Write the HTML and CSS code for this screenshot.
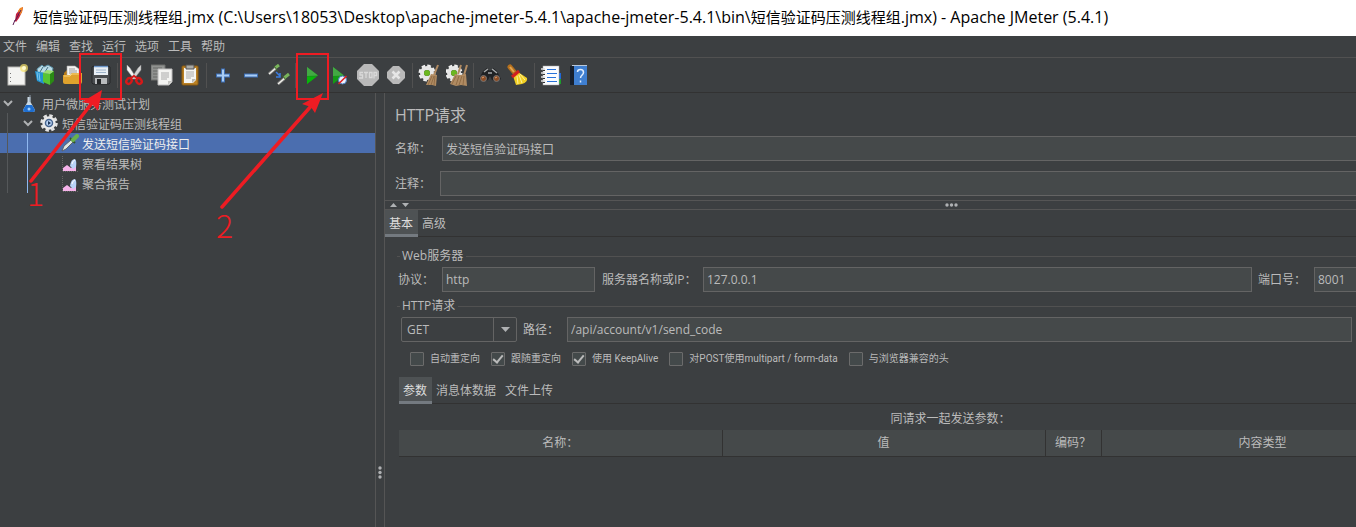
FILE: index.html
```html
<!DOCTYPE html>
<html lang="zh-CN">
<head>
<meta charset="utf-8">
<title>Apache JMeter (5.4.1)</title>
<link rel="stylesheet" href="styles.css">
</head>
<body>
<div class="app">
  <header class="titlebar">
    <svg class="feather" viewBox="0 0 14 22" aria-hidden="true">
      <path d="M4 15L5 8 9 3 12 1 11 6 8 12 5 16z" fill="#c3203f"/>
      <path d="M7 5L9 2 12 1 11 6 9 9z" fill="#f08a24"/>
      <path d="M4 14L2 19M4 15L10 4" stroke="#5a1b52" fill="none"/>
    </svg>
    <h1 class="title">短信验证码压测线程组<span class="latin">.jmx (C:\Users\18053\Desktop\apache-jmeter-5.4.1\apache-jmeter-5.4.1\bin\</span>短信验证码压测线程组<span class="latin">.jmx) - Apache JMeter (5.4.1)</span></h1>
  </header>

  <nav class="menu">
    <button>文件</button><button>编辑</button><button>查找</button><button>运行</button><button>选项</button><button>工具</button><button>帮助</button>
  </nav>

  <div class="toolbar" role="toolbar">
    <button aria-label="新建"><svg viewBox="0 0 22 22"><rect x="2" y="3" width="17" height="18" fill="#f3f3f1" stroke="#b8b8b4"/><path d="M4.500 9v1M4.500 13v1M4.500 17v1" stroke="#777"/><circle cx="18" cy="4" r="4" fill="#f6e36a" opacity=".7"/><circle cx="18" cy="4" r="2" fill="#fffbd0"/></svg></button>
    <button aria-label="模板"><svg viewBox="0 0 22 22"><path d="M3 5L8 1 10 3 14 1 19 4 18 9 4 9z" fill="#b9dbe6" stroke="#5a8fa5"/><path d="M6 8l3-5M11 8l3-5" stroke="#456f82"/><path d="M1 7L10 9V20L3 17z" fill="#2393cf"/><path d="M3 8l1 8M5 9l1 8" stroke="#7cc6ee"/><path d="M9 9L16 10V21L9 18z" fill="#57c534"/><path d="M16 10L20 7V17L16 21z" fill="#2a8a14"/><path d="M9 9L13 6 20 7 16 10z" fill="#9be070"/></svg></button>
    <button aria-label="打开"><svg viewBox="0 0 22 22"><path d="M2 9L5 6H16L19 9V18H2z" fill="#b87b16"/><path d="M5 2H13L17 5V12H5z" fill="#f4f4f2" stroke="#aaa" stroke-width=".6"/><path d="M7 5h6M7 7h8M7 9h8" stroke="#999"/><path d="M1 11H8L10 9H20V18Q20 20 18 20H3Q1 20 1 18z" fill="#dfa22d"/><path d="M2 12H8L10 10H19" stroke="#f6d27a" fill="none"/></svg></button>
    <button aria-label="保存"><svg viewBox="0 0 22 22"><path d="M2 3L4 2H18L20 3V19L19 20H3L2 19z" fill="#4a4d50" stroke="#252729"/><rect x="4" y="2" width="14" height="9" fill="#e9eff5"/><path d="M4 2.500h14" stroke="#6d96c8" stroke-width="1.500"/><path d="M6 6h10M6 8.500h10" stroke="#9fb5cc"/><rect x="5" y="14" width="12" height="6" fill="#b9bbbd"/><rect x="7" y="15" width="4" height="5" fill="#252729"/></svg></button>
    <i class="sep"></i>
    <button aria-label="剪切"><svg viewBox="0 0 22 22"><path d="M4 1L7 4 14 15 11 15 4 6z" fill="#f4f4f4" stroke="#999" stroke-width=".5"/><path d="M18 1L15 4 8 15 11 15 18 6z" fill="#d5d5d5" stroke="#888" stroke-width=".5"/><ellipse cx="6" cy="17" rx="2.500" ry="3" transform="rotate(35 6 17)" fill="none" stroke="#d71919" stroke-width="2.400"/><ellipse cx="16" cy="17" rx="2.500" ry="3" transform="rotate(-35 16 17)" fill="none" stroke="#d71919" stroke-width="2.400"/><path d="M8 14l3-2 3 2" stroke="#d71919" stroke-width="2" fill="none"/></svg></button>
    <button aria-label="复制"><svg viewBox="0 0 22 22"><path d="M0 1H14V16H0z" fill="#909290" stroke="#6c6e6c"/><path d="M2 4h9M2 7h5M2 10h5M2 13h5" stroke="#686a68"/><path d="M7 5H21V18L18 21H7z" fill="#f3f3f1" stroke="#bbb"/><path d="M10 9h8M10 11h8M10 13h8M10 15h6" stroke="#aaa"/><path d="M21 17h-4v4z" fill="#c5c5c1"/></svg></button>
    <button aria-label="粘贴"><svg viewBox="0 0 22 22"><rect x="3" y="2" width="16" height="19" rx="1" fill="#b98024" stroke="#8a5a10"/><path d="M5 4H17V16L14 19H5z" fill="#f5f5f3"/><path d="M7 1h8v4H7z" fill="#a9aaa7" stroke="#555"/><path d="M7 8h8M7 10h8M7 12h8M7 14h5" stroke="#aaa"/><path d="M17 15h-4v4z" fill="#b9b9b4"/></svg></button>
    <i class="sep"></i>
    <button aria-label="展开"><svg viewBox="0 0 22 22"><path d="M11 4.500V18.500M4 11.500H18" stroke="#3d6fb5" stroke-width="4"/><path d="M11 5.500V17.500M5 11.500H17" stroke="#a9cdf5" stroke-width="2"/></svg></button>
    <button aria-label="折叠"><svg viewBox="0 0 22 22"><path d="M4 11.500H18" stroke="#3d6fb5" stroke-width="4"/><path d="M5 11.500H17" stroke="#a9cdf5" stroke-width="2"/></svg></button>
    <button aria-label="切换"><svg viewBox="0 0 22 22"><path d="M1 10L8 4M10 20L17 14" stroke="#777" stroke-width="3"/><path d="M1 10L8 4M10 20L17 14" stroke="#efefea" stroke-width="1.600"/><path d="M7 4l4-3M16 14l5-4" stroke="#79b45b" stroke-width="3"/><path d="M6 2l4 5M14 11l4 5" stroke="#3f602f"/><path d="M8 8l4 4m0-3v4h-4" stroke="#3b7de0" stroke-width="1.500" fill="none"/></svg></button>
    <i class="sep"></i>
    <button aria-label="启动"><svg viewBox="0 0 22 22"><path d="M6 3L17 11.500 6 20z" fill="#149b16"/><path d="M6 3L17 11.500 6 12z" fill="#43a944"/><path d="M6 13h9L6 20z" fill="#08b50a"/></svg></button>
    <button aria-label="不停顿启动"><svg viewBox="0 0 22 22"><path d="M4 3L15 11.500 4 20z" fill="#149b16"/><path d="M4 3L15 11.500 4 12z" fill="#43a944"/><circle cx="13.500" cy="16" r="4" fill="#eef4ff" stroke="#4c7fc3"/><path d="M9.500 20L17.500 12" stroke="#e02020" stroke-width="1.600"/></svg></button>
    <button aria-label="停止" disabled><svg viewBox="0 0 22 22"><path d="M7 0H15L22 7V15L15 22H7L0 15V7z" fill="#b9b9b9"/><path d="M6 8.500H3V11H5.500V14H2M7 8.500H11M9 8.500V14M12.500 8.500H15V13.500H12.500zM17 14.500V8.500H19.500V11.500H17" fill="none" stroke="#d9d9d9" stroke-width="1.300"/></svg></button>
    <button aria-label="关闭" disabled><svg viewBox="0 0 22 22"><path d="M8 2H14L20 8V14L14 20H8L2 14V8z" fill="#b9b9b9"/><path d="M7.500 7.500L14.500 14.500M14.500 7.500L7.500 14.500" stroke="#e6e6e6" stroke-width="2.500"/></svg></button>
    <i class="sep"></i>
    <button aria-label="清除"><svg viewBox="0 0 22 22"><circle cx="9" cy="9" r="7" fill="none" stroke="#f0f0f0" stroke-width="3" stroke-dasharray="3.500 2"/><circle cx="9" cy="9" r="5" fill="none" stroke="#e6e6e6" stroke-width="4"/><circle cx="9" cy="9" r="3" fill="#6bb720"/><path d="M20 1L16 11" stroke="#b18b62" stroke-width="2"/><path d="M13 10l6 1-1 11-4-1-6 0z" fill="#b08b62"/><path d="M14 12l-4 9M16 12l-3 9M17 12l-1 9" stroke="#7c5934" stroke-width=".6"/></svg></button>
    <button aria-label="清除全部"><svg viewBox="0 0 22 22"><circle cx="8" cy="9" r="7" fill="none" stroke="#f0f0f0" stroke-width="3" stroke-dasharray="3.500 2"/><circle cx="8" cy="9" r="5" fill="none" stroke="#e6e6e6" stroke-width="4"/><circle cx="8" cy="9" r="3" fill="#6bb720"/><path d="M15 1L12 10M21 1L18 11" stroke="#b18b62" stroke-width="2"/><path d="M9 10l5 1 6-1 1 12-6-1-5 1-6-2z" fill="#b08b62"/><path d="M10 12l-4 8M13 12l-3 9M16 12l-3 9M18 12l-1 9" stroke="#7c5934" stroke-width=".6"/></svg></button>
    <i class="sep"></i>
    <button aria-label="搜索"><svg viewBox="0 0 22 22"><path d="M4 7L8 4 11 7 14 4 18 7 22 15 18 18 13 16 11 12 9 16 4 18 0 15z" fill="#202224"/><path d="M5 8l4-3M13 5l5 4M9 9h4" stroke="#a5a8a9" stroke-width="1.500"/><circle cx="4.500" cy="14.500" r="3" fill="#8c4d25" stroke="#777"/><circle cx="17.500" cy="14.500" r="3" fill="#8c4d25" stroke="#777"/><path d="M3 14l2-1M16 14l2-1" stroke="#e2a270"/></svg></button>
    <button aria-label="重置搜索"><svg viewBox="0 0 22 22"><path d="M3 3L8 9" stroke="#b5701d" stroke-width="5" stroke-linecap="round"/><path d="M3 3L7 8" stroke="#e2a652" stroke-width="2"/><path d="M11 8L20 14Q21 18 15 20L9 21 6 12z" fill="#f1cf24"/><path d="M10 12l1 8M12 11l3 8M13 10l5 6" stroke="#fff29a"/><path d="M5 13L12 7" stroke="#d11f1f" stroke-width="3"/></svg></button>
    <i class="sep"></i>
    <button aria-label="函数助手"><svg viewBox="0 0 22 22"><path d="M17 9h4v6h-4z" fill="#2168d8"/><path d="M17 15h4v5h-4z" fill="#1c9e2c"/><rect x="3" y="2" width="16" height="19" fill="#fafcff" stroke="#aaa" stroke-width=".5"/><path d="M7 5.500h9M7 9.500h10M7 13.500h9M7 17.500h10" stroke="#2772d9"/><path d="M1 5h4M1 9h4M1 13h4M1 17h4" stroke="#ddd" stroke-width="1.500"/><path d="M3 6.500h2M3 10.500h2M3 14.500h2M3 18.500h2" stroke="#333"/></svg></button>
    <button aria-label="帮助"><svg viewBox="0 0 22 22"><path d="M2 2H19V21H2z" fill="#3f7fd1"/><path d="M2 2H6V21H2z" fill="#17202e"/><path d="M4 1.500H19" stroke="#b9c9dc"/><path d="M9.500 8Q9.500 5.500 12.500 5.500T15.500 8.500C15.500 11 12.500 11 12.500 14M12.500 16.500V18.500" stroke="#e2efff" stroke-width="1.500" fill="none"/></svg></button>
  </div>

  <main class="body">
    <aside class="tree">
      <ul class="nodes">
        <li class="node">
          <svg class="chev" viewBox="0 0 10 10"><path d="M1 3L5 7 9 3" /></svg>
          <svg class="ico" viewBox="0 0 18 18"><path d="M7.500 3H10.500V8L15 16Q15 18 13 18H5Q3 18 3 16L7.500 8z" fill="#c9d8e4"/><path d="M6 11H12L15 16Q15 18 13 18H5Q3 18 3 16z" fill="#1f6fd1"/><path d="M10 1V8" stroke="#8d9ca9"/><circle cx="9" cy="15" r="1.500" fill="#9fd0ff"/></svg>
          <span>用户微服务测试计划</span>
        </li>
        <li class="node lv2">
          <svg class="chev" viewBox="0 0 10 10"><path d="M1 3L5 7 9 3" /></svg>
          <svg class="ico" viewBox="0 0 18 18"><circle cx="9" cy="9" r="7.500" fill="none" stroke="#e2e2e2" stroke-width="2.500" stroke-dasharray="3.500 2.390"/><circle cx="9" cy="9" r="5.500" fill="#46648e" stroke="#e9e9e9" stroke-width="2.500"/><circle cx="9" cy="9" r="2.800" fill="#b9d2f3"/><path d="M8 7L11 9 8 11z" fill="#1d3558"/></svg>
          <span>短信验证码压测线程组</span>
        </li>
        <li class="node lv3 selected">
          <svg class="ico" viewBox="0 0 18 18"><path d="M1 17L3 12 10 6 12 8 5 15z" fill="#dfe6e4" stroke="#555" stroke-width=".8"/><path d="M9 4L14 9" stroke="#35552a" stroke-width="2"/><path d="M12 6L16 2" stroke="#69b04b" stroke-width="4" stroke-linecap="round"/></svg>
          <span>发送短信验证码接口</span>
        </li>
        <li class="node lv3">
          <svg class="ico" viewBox="0 0 18 18"><path d="M1.500 2V17.500H17" stroke="#666" stroke-dasharray="1 1" fill="none"/><path d="M2 17V14L6 11 10 14 15 11V17z" fill="#f5b3ea"/><path d="M9 12Q10 5 14 5 16 7 15 13L12 15z" fill="#b9d4f8"/><path d="M11 10Q12 6 14 6" stroke="#fff" fill="none"/></svg>
          <span>察看结果树</span>
        </li>
        <li class="node lv3">
          <svg class="ico" viewBox="0 0 18 18"><path d="M1.500 2V17.500H17" stroke="#666" stroke-dasharray="1 1" fill="none"/><path d="M2 17V14L6 11 10 14 15 11V17z" fill="#f5b3ea"/><path d="M9 12Q10 5 14 5 16 7 15 13L12 15z" fill="#b9d4f8"/><path d="M11 10Q12 6 14 6" stroke="#fff" fill="none"/></svg>
          <span>聚合报告</span>
        </li>
      </ul>
    </aside>

    <div class="vsplit"><svg viewBox="0 0 4 13"><circle cx="2" cy="2" r="1.700"/><circle cx="2" cy="6.500" r="1.700"/><circle cx="2" cy="11" r="1.700"/></svg></div>

    <section class="panel">
      <div class="head">
        <h2>HTTP请求</h2>
        <div class="row name"><label for="name">名称：</label><input id="name" value="发送短信验证码接口"></div>
        <div class="row comment"><label for="comment">注释：</label><input id="comment"></div>
      </div>

      <div class="hsplit">
        <svg class="arrows" viewBox="0 0 19 6"><path d="M0 5L3.500 1 7 5zM12 1L15.500 5 19 1z"/></svg>
        <svg class="dots" viewBox="0 0 13 4"><circle cx="2" cy="2" r="1.700"/><circle cx="6.500" cy="2" r="1.700"/><circle cx="11" cy="2" r="1.700"/></svg>
      </div>

      <div class="tabs"><button class="on">基本</button><button>高级</button></div>

      <div class="content">
        <fieldset>
          <legend>Web服务器</legend>
          <div class="row server">
            <label for="proto">协议：</label><input id="proto" value="http">
            <label for="host">服务器名称或IP：</label><input id="host" value="127.0.0.1">
            <label for="port">端口号：</label><input id="port" value="8001">
          </div>
        </fieldset>
        <fieldset>
          <legend>HTTP请求</legend>
          <div class="row request">
            <div class="combo">
              <select aria-label="方法"><option>GET</option></select>
              <svg viewBox="0 0 9 5"><path d="M0 0H9L4.500 5z"/></svg>
            </div>
            <label for="path">路径：</label><input id="path" value="/api/account/v1/send_code">
          </div>
          <div class="checks">
            <label><input type="checkbox">自动重定向</label>
            <label><input type="checkbox" checked>跟随重定向</label>
            <label><input type="checkbox" checked>使用 KeepAlive</label>
            <label><input type="checkbox">对POST使用multipart / form-data</label>
            <label><input type="checkbox">与浏览器兼容的头</label>
          </div>
        </fieldset>

        <div class="tabs inner"><button class="on">参数</button><button>消息体数据</button><button>文件上传</button></div>

        <table class="params">
          <caption>同请求一起发送参数：</caption>
          <colgroup><col class="wide"><col class="wide"><col class="enc"><col class="wide"><col></colgroup>
          <thead><tr><th>名称：</th><th>值</th><th>编码？</th><th>内容类型</th><th></th></tr></thead>
        </table>
      </div>
    </section>
  </main>

  <svg class="marks" width="340" height="215" viewBox="0 0 340 215" aria-hidden="true">
    <g fill="none" stroke="#ee1c23" stroke-width="2"><rect x="80" y="54" width="41" height="45"/><rect x="297" y="54" width="31" height="45"/></g>
    <path d="M31 181L92 103M222 207L312 105" stroke="#ee1c23" stroke-width="3.500" stroke-linecap="round"/>
    <path d="M102 90L98 111 92 104 82 102zM323 93L315 113 311 107 302 104z" fill="#ee1c23"/>
  </svg>
  <span class="mark one">1</span>
  <span class="mark two">2</span>
</div>
</body>
</html>
```
FILE: styles.css
```css
* { box-sizing: border-box; }
body {
  margin: 0;
  background: #3c3f41;
  color: #bbb;
  font: 12px/16px "Open Sans", "Noto Sans CJK SC", sans-serif;
}
button, input, select { font: inherit; color: inherit; margin: 0; }
button { background: none; border: 0; padding: 0; }
h1, h2, ul { margin: 0; padding: 0; font-weight: 400; list-style: none; }

.app { position: relative; display: flex; flex-direction: column; height: 100vh; overflow: hidden; }

.titlebar { display: flex; align-items: center; gap: 8px; flex: none; height: 36px; padding: 0 0 2px 11px; background: #fff; color: #000; }
.feather { width: 14px; height: 22px; }
.title { font-size: 15px; line-height: 20px; white-space: nowrap; }
.latin { font-size: 16px; }

.menu { display: flex; flex: none; gap: 9px; height: 22px; padding-left: 3px; border-bottom: 1px solid #515151; }

.toolbar { display: flex; align-items: center; flex: none; height: 35px; padding-left: 3px; border-bottom: 1px solid #323232; }
.toolbar button { display: grid; place-items: center; width: 28px; height: 28px; }
.toolbar svg { width: 22px; height: 22px; }
.sep { width: 1px; height: 25px; margin: 0 2px; background: #515151; }

.body { display: flex; flex: 1; min-height: 0; }

.tree { flex: none; width: 376px; border-right: 1px solid #555; }
.nodes { position: relative; }
.nodes::before, .nodes::after { content: ""; position: absolute; width: 1px; bottom: 0; }
.nodes::before { left: 7px; top: 20px; background: #55585a; }
.nodes::after { left: 27px; top: 40px; background: #8fb8f0; }
.node { display: flex; align-items: center; height: 20px; padding-left: 3px; white-space: nowrap; }
.node span { padding-top: 3px; }
.lv2 { padding-left: 23px; }
.lv3 { padding-left: 61px; }
.chev { width: 10px; height: 10px; margin-right: 7px; fill: none; stroke: #afb1b3; stroke-width: 2; }
.ico { width: 18px; height: 18px; margin-right: 4px; }
.lv3 .ico { margin-right: 3px; }
.selected { background: #4b6eaf; color: #eee; }

.vsplit { display: flex; flex: none; align-items: flex-end; justify-content: center; width: 9px; padding-bottom: 48px; border-right: 1px solid #555; }
.vsplit svg { width: 4px; height: 13px; fill: #afb1b3; }

.panel { flex: 1; min-width: 0; overflow: hidden; }
.head { padding: 12px 0 4px 10px; }
h2 { font-size: 16px; line-height: 20px; }
.row { display: flex; align-items: center; }
.row input { min-width: 0; height: 24px; padding: 0 3px; background: #45494a; border: 1px solid #646464; }
.row label { white-space: nowrap; }
.name { margin-top: 11px; }
.name label { width: 47px; }
.comment { margin-top: 10px; }
.comment label { width: 45px; }
.head .row input { flex: 1; height: 25px; border-right: 0; }

.hsplit { display: grid; grid-template-columns: 1fr auto 1fr; align-items: center; height: 10px; border: solid #555; border-width: 1px 0; margin-right: -156px; padding-left: 5px; }
.arrows { width: 19px; height: 6px; fill: #afb1b3; }
.dots { width: 13px; height: 4px; fill: #afb1b3; }

.tabs { display: flex; height: 27px; border-bottom: 1px solid #323232; }
.tabs button { height: 27px; padding: 3px 5px 0 4px; border-bottom: 3px solid transparent; }
.tabs .on { background: #4e5254; border-color: #747a80; color: #ddd; }

.content { padding-left: 12px; }
fieldset { margin: 0; padding: 0; border: solid #515151; border-width: 1px 0 0; min-width: 0; }
legend { margin-left: 3px; padding: 0 3px 0 2px; }
.content fieldset:first-child { margin-top: 11px; }
.server, .request { padding-top: 3px; }
.server input, .request input { height: 25px; }
.server { padding-bottom: 6px; }
.server label[for="proto"] { width: 45px; padding-left: 1px; }
.server label[for="host"] { width: 101px; margin-left: 7px; }
.server label[for="port"] { width: 56px; margin-left: 6px; }
#proto { width: 153px; }
#host { flex: 1; }
#port { width: 42px; border-right: 0; }

.request { padding-left: 4px; padding-right: 4px; }
.combo { position: relative; width: 116px; margin-right: 6px; }
.combo select { display: block; width: 100%; height: 25px; padding: 0 5px; appearance: none; border: 1px solid #646464; border-radius: 2px; background: linear-gradient(90deg, #3c3f41 91px, #646464 91px 92px, #3c3f41 92px); }
.combo svg { position: absolute; right: 7px; top: 10px; width: 9px; height: 5px; fill: #afb1b3; pointer-events: none; }
.request label { width: 44px; }
#path { flex: 1; }

.checks { display: flex; gap: 11px; padding: 8px 0 0 13px; font-family: Roboto, "Noto Sans CJK SC", sans-serif; font-size: 10px; }
.checks label { display: flex; align-items: center; gap: 6px; height: 18px; white-space: nowrap; }
.checks input { appearance: none; display: grid; place-items: center; width: 14px; height: 14px; border: 1px solid #6b6b6b; border-radius: 1px; background: #43494a; }
.checks input:checked::before { content: ""; width: 4px; height: 8px; margin-top: -2px; border: solid #bbb; border-width: 0 2px 2px 0; transform: rotate(40deg); }

.inner { margin: 9px 0 0 2px; }

.params { width: calc(100% + 144px); margin-left: 2px; border-collapse: collapse; table-layout: fixed; }
.params caption { padding: 7px 0 3px; }
.params .wide { width: 323px; }
.params .enc { width: 56px; }
.params th { height: 26px; padding: 0; font-weight: 400; background: #45494a; border: solid #323232; border-width: 0 1px 1px 0; }

.marks { position: absolute; left: 0; top: 0; pointer-events: none; }
.mark { position: absolute; color: #ee1c23; font: 300 32px/32px "Noto Sans CJK SC", sans-serif; }
.one { left: 27px; top: 176px; }
.two { left: 216px; top: 208px; }
```
